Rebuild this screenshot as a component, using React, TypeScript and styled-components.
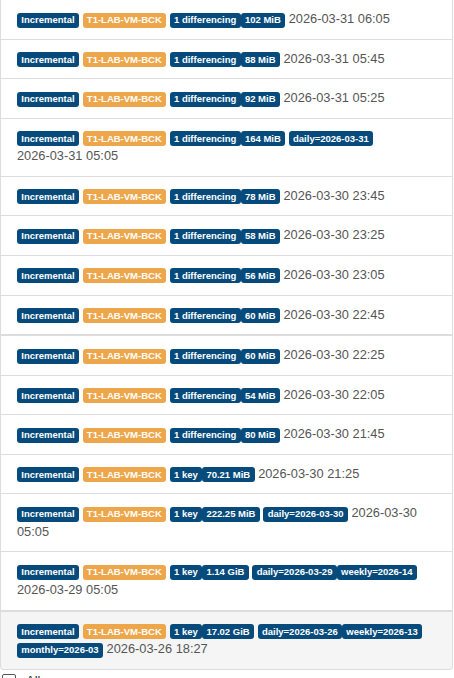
import React from 'react';
import styled, {createGlobalStyle} from 'styled-components';

const GlobalStyle = createGlobalStyle`
  body {
    margin: 0;
    font-family: "Liberation Sans", Arial, sans-serif;
    font-size: 13px;
    line-height: 1.42857;
    color: #555;
    background: #fff;
    overflow: hidden;
  }
`;

const List = styled.div`
  width: 453px;
  margin-top: -1px;
  display: flex;
  flex-direction: column;
`;

const Item = styled.div<{$thick?: boolean; $muted?: boolean; $last?: boolean}>`
  padding: 10px 15px 10px 16px;
  border: 1px solid #ddd;
  border-top-width: ${p => (p.$thick ? '2px' : '1px')};
  margin-bottom: -1px;
  background: ${p => (p.$muted ? '#f5f5f5' : '#fff')};
  border-radius: ${p => (p.$last ? '0 0 4px 4px' : '0')};
`;

const Label = styled.span<{$tone?: 'primary' | 'warning'}>`
  display: inline-block;
  font-size: 9.5px;
  font-weight: bold;
  line-height: 1;
  padding: 2.5px 4.3px 3px;
  margin-top: 1px;
  color: #fff;
  white-space: nowrap;
  vertical-align: baseline;
  border-radius: 3px;
  background: ${p => (p.$tone === 'warning' ? '#eea64b' : '#064b7c')};
`;

const Word = styled.span`
  white-space: nowrap;
  font-size: 12.8px;
`;

const Footer = styled.label`
  display: flex;
  align-items: center;
  gap: 10px;
  margin-top: 3px;
  padding-left: 2px;
  font-size: 13px;
  color: #333;
`;

const Box = styled.span`
  width: 12px;
  height: 12px;
  border: 1px solid #555;
  border-radius: 2px;
  display: inline-block;
`;

type Row = {
  kind: string;
  size: string;
  tags?: string[];
  time: string;
};

const rows: Row[] = [
  {kind: '1 differencing', size: '102 MiB', time: '2026-03-31 06:05'},
  {kind: '1 differencing', size: '88 MiB', time: '2026-03-31 05:45'},
  {kind: '1 differencing', size: '92 MiB', time: '2026-03-31 05:25'},
  {kind: '1 differencing', size: '164 MiB', tags: ['daily=2026-03-31'], time: '2026-03-31 05:05'},
  {kind: '1 differencing', size: '78 MiB', time: '2026-03-30 23:45'},
  {kind: '1 differencing', size: '58 MiB', time: '2026-03-30 23:25'},
  {kind: '1 differencing', size: '56 MiB', time: '2026-03-30 23:05'},
  {kind: '1 differencing', size: '60 MiB', time: '2026-03-30 22:45'},
  {kind: '1 differencing', size: '60 MiB', time: '2026-03-30 22:25'},
  {kind: '1 differencing', size: '54 MiB', time: '2026-03-30 22:05'},
  {kind: '1 differencing', size: '80 MiB', time: '2026-03-30 21:45'},
  {kind: '1 key', size: '70.21 MiB', time: '2026-03-30 21:25'},
  {kind: '1 key', size: '222.25 MiB', tags: ['daily=2026-03-30'], time: '2026-03-30 05:05'},
  {kind: '1 key', size: '1.14 GiB', tags: ['daily=2026-03-29', 'weekly=2026-14'], time: '2026-03-29 05:05'},
  {
    kind: '1 key',
    size: '17.02 GiB',
    tags: ['daily=2026-03-26', 'weekly=2026-13', 'monthly=2026-03'],
    time: '2026-03-26 18:27',
  },
];

export default function App() {
  return (
    <>
      <GlobalStyle />
      <List>
        {rows.map((r, i) => {
          const [day, clock] = r.time.split(' ');
          return (
            <Item key={i} $thick={i === 8 || i === 14} $muted={i === 14} $last={i === rows.length - 1}>
              <Label>Incremental</Label> <Label $tone="warning">T1-LAB-VM-BCK</Label>{' '}
              <Label>{r.kind}</Label>
              <Label>{r.size}</Label>
              {r.tags && ' '}
              {r.tags?.map(t => (
                <Label key={t}>{t}</Label>
              ))}{' '}
              <Word>{day}</Word> <Word>{clock}</Word>
            </Item>
          );
        })}
      </List>
      <Footer>
        <Box />
        All
      </Footer>
    </>
  );
}
